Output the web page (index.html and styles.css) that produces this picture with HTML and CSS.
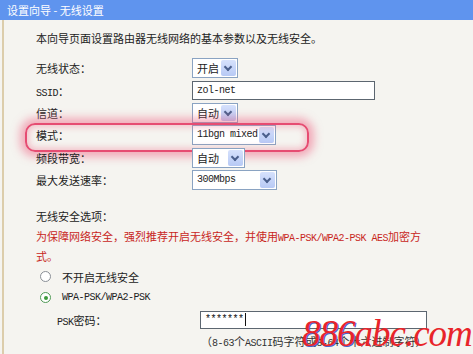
FILE: index.html
```html
<!DOCTYPE html>
<html lang="zh-CN">
  <head>
    <meta charset="UTF-8" />
    <meta name="viewport" content="width=device-width, initial-scale=1.0" />
    <title>设置向导 - 无线设置</title>
    <link rel="stylesheet" href="styles.css">
  </head>
  <body>
    <div class="titlebar">设置向导 - 无线设置</div>

    <div class="panel">
      <p class="intro">本向导页面设置路由器无线网络的基本参数以及无线安全。</p>

      <div class="form">
        <div class="row">
          <span class="label">无线状态：</span>
          <span class="select w46"><span class="val">开启</span><i class="arrow"></i></span>
        </div>
        <div class="row">
          <span class="label"><span class="mono">SSID</span>：</span>
          <span class="input ssid"><span class="mono">zol-net</span></span>
        </div>
        <div class="row">
          <span class="label">信道：</span>
          <span class="select w46"><span class="val">自动</span><i class="arrow"></i></span>
        </div>
        <div class="row marked">
          <span class="label">模式：</span>
          <span class="select w84"><span class="val mono">11bgn mixed</span><i class="arrow"></i></span>
          <span class="glow"></span>
        </div>
        <div class="row">
          <span class="label">频段带宽：</span>
          <span class="select w53"><span class="val">自动</span><i class="arrow"></i></span>
        </div>
        <div class="row">
          <span class="label">最大发送速率：</span>
          <span class="select w85"><span class="val mono">300Mbps</span><i class="arrow"></i></span>
        </div>
      </div>

      <p class="section">无线安全选项：</p>
      <p class="warn">为保障网络安全，强烈推荐开启无线安全，并使用<span class="mono">WPA-PSK/WPA2-PSK AES</span>加密方<br>式。</p>

      <div class="radio-row">
        <span class="radio"></span>
        <span>不开启无线安全</span>
      </div>
      <div class="radio-row">
        <span class="radio checked"></span>
        <span class="mono">WPA-PSK/WPA2-PSK</span>
      </div>

      <div class="psk-row">
        <span class="psk-label"><span class="mono">PSK</span>密码：</span>
        <span class="input psk"><span class="stars">*******</span><i class="caret"></i></span>
      </div>
      <p class="hint">（<span class="mono">8-63</span>个<span class="mono">ASCII</span>码字符或<span class="mono">8-64</span>个十六进制字符）</p>
    </div>

    <div class="watermark"><span class="num">886</span>abc.com</div>
  </body>
</html>
```

FILE: styles.css
```css
body {
  margin: 0;
  padding: 0;
  width: 473px;
  height: 354px;
  overflow: hidden;
  position: relative;
  background-color: #f5f4f0;
  font-family: "Noto Sans CJK SC", sans-serif;
  font-size: 11px;
  color: #222;
}
p {
  margin: 0;
}
.mono {
  font-family: "Liberation Mono", "Noto Sans CJK SC", monospace;
  font-size: 10px;
  letter-spacing: -0.5px;
  line-height: 1;
}
.titlebar {
  height: 20px;
  line-height: 20px;
  padding-left: 7px;
  background-color: #5f94ee;
  color: #fff;
  font-size: 11px;
}
.panel {
  margin-left: 2px;
  border-left: 2px solid #dccdab;
  height: 334px;
  padding-left: 32px;
  box-sizing: border-box;
}
.intro {
  padding-top: 10px;
  line-height: 16px;
}
.form {
  margin-top: 11px;
}
.row {
  height: 22.4px;
  display: flex;
  align-items: center;
  position: relative;
}
.label {
  width: 156px;
  flex-shrink: 0;
}
.select {
  height: 20px;
  display: flex;
  align-items: center;
  border: 1px solid #8aa3c2;
  background-color: #fff;
  box-sizing: border-box;
}
.select .val {
  flex: 1;
  padding-left: 4px;
}
.arrow {
  width: 15px;
  height: 16px;
  margin-right: 1px;
  background: linear-gradient(#d6e1fc, #b7c9f5);
  border-radius: 2px;
  position: relative;
}
.arrow::after {
  content: "";
  position: absolute;
  left: 4px;
  top: 4px;
  width: 4px;
  height: 4px;
  border-right: 2px solid #4a5f8c;
  border-bottom: 2px solid #4a5f8c;
  transform: rotate(45deg);
}
.w46 { width: 46px; }
.w53 { width: 53px; }
.w84 { width: 84px; }
.w85 { width: 85px; }
.input {
  display: flex;
  align-items: center;
  background-color: #fff;
  border: 1px solid #5c6670;
  box-sizing: border-box;
  padding-left: 4px;
}
.ssid {
  width: 183px;
  height: 19px;
}
.glow {
  position: absolute;
  left: -11px;
  top: -1px;
  width: 280px;
  height: 25px;
  border: 2px solid rgba(228, 58, 100, 0.9);
  border-radius: 10px;
  box-shadow: 0 0 9px 5px rgba(240, 95, 130, 0.5), inset 0 0 6px 2px rgba(240, 110, 140, 0.4);
  pointer-events: none;
}
.section {
  margin-top: 15px;
  line-height: 20px;
}
.warn {
  margin-top: 1px;
  line-height: 19.5px;
  color: #c8261c;
}
.radio-row {
  height: 21px;
  display: flex;
  align-items: center;
  padding-left: 4px;
}
.radio {
  width: 11px;
  height: 11px;
  border: 1px solid #8a8f96;
  border-radius: 50%;
  background-color: #fff;
  margin-right: 11px;
  box-sizing: border-box;
  position: relative;
}
.radio.checked {
  border-color: #4f9a55;
}
.radio.checked::after {
  content: "";
  position: absolute;
  left: 2.5px;
  top: 2.5px;
  width: 4px;
  height: 4px;
  border-radius: 50%;
  background-color: #3c9a3a;
}
.psk-row {
  height: 23px;
  display: flex;
  align-items: center;
  padding-left: 21px;
}
.psk-label {
  width: 143px;
}
.psk {
  width: 227px;
  height: 18px;
}
.stars {
  font-family: "Liberation Mono", monospace;
  font-size: 10px;
  letter-spacing: -0.5px;
  color: #111;
}
.caret {
  width: 1px;
  height: 13px;
  background-color: #111;
  margin-left: 1px;
}
.hint {
  padding-left: 165px;
  line-height: 20px;
  color: #333;
}
.watermark {
  position: absolute;
  left: 302px;
  top: 314px;
  font-family: "Liberation Serif", serif;
  font-style: italic;
  font-size: 37px;
  line-height: 40px;
  color: #e8242a;
  letter-spacing: -1px;
}
.watermark .num {
  text-shadow: 1px 1px 0 #4a63c8;
}
```
